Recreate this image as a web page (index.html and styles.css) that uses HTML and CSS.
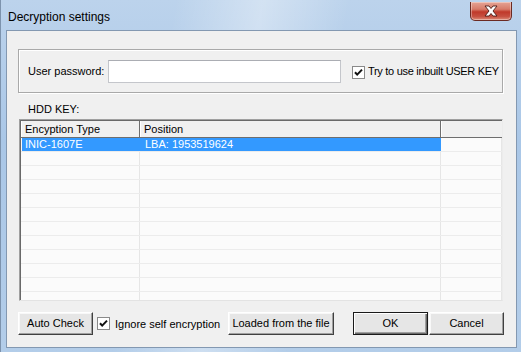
FILE: index.html
```html
<!DOCTYPE html>
<html>
<head>
<meta charset="utf-8">
<link rel="stylesheet" href="styles.css">
</head>
<body>
<div class="window">
  <div class="titlebar">
    <span class="title">Decryption settings</span>
    <div class="close">
      <svg width="16" height="12" viewBox="0 0 16 12"><path d="M2 1 L6 1 L8 3.5 L10 1 L14 1 L10 6 L14 11 L10 11 L8 8.5 L6 11 L2 11 L6 6 Z" fill="#fff" stroke="#4a1a14" stroke-width="0.9" stroke-linejoin="round"/></svg>
    </div>
  </div>
  <div class="client">
    <div class="group">
      <span class="pw-label">User password:</span>
      <div class="textbox"></div>
      <span class="check"><svg width="13" height="13" viewBox="0 0 13 13"><rect x="0.5" y="0.5" width="12" height="12" fill="#fff" stroke="#8a8a8a"/><path d="M3 6.2 L5.2 8.6 L10 3.6" fill="none" stroke="#111" stroke-width="2"/></svg></span>
      <span class="check-text">Try to use inbuilt USER KEY</span>
    </div>
    <div class="hdd-label">HDD KEY:</div>
    <div class="listview">
      <div class="lv-header">
        <div class="hcell c1">Encyption Type</div>
        <div class="hcell c2">Position</div>
        <div class="hcell c3"></div>
      </div>
      <div class="lv-row selected"><div class="cell c1">INIC-1607E</div><div class="cell c2">LBA: 1953519624</div><div class="cell c3"></div></div>
      <div class="lv-row"><div class="cell c1"></div><div class="cell c2"></div><div class="cell c3"></div></div>
      <div class="lv-row"><div class="cell c1"></div><div class="cell c2"></div><div class="cell c3"></div></div>
      <div class="lv-row"><div class="cell c1"></div><div class="cell c2"></div><div class="cell c3"></div></div>
      <div class="lv-row"><div class="cell c1"></div><div class="cell c2"></div><div class="cell c3"></div></div>
      <div class="lv-row"><div class="cell c1"></div><div class="cell c2"></div><div class="cell c3"></div></div>
      <div class="lv-row"><div class="cell c1"></div><div class="cell c2"></div><div class="cell c3"></div></div>
      <div class="lv-row"><div class="cell c1"></div><div class="cell c2"></div><div class="cell c3"></div></div>
      <div class="lv-row"><div class="cell c1"></div><div class="cell c2"></div><div class="cell c3"></div></div>
      <div class="lv-row"><div class="cell c1"></div><div class="cell c2"></div><div class="cell c3"></div></div>
      <div class="lv-row"><div class="cell c1"></div><div class="cell c2"></div><div class="cell c3"></div></div>
      <div class="lv-row"><div class="cell c1"></div><div class="cell c2"></div><div class="cell c3"></div></div>
    </div>
    <div class="actions">
      <div class="btn auto">Auto Check</div>
      <span class="check ignore"><svg width="13" height="13" viewBox="0 0 13 13"><rect x="0.5" y="0.5" width="12" height="12" fill="#fff" stroke="#8a8a8a"/><path d="M3 6.2 L5.2 8.6 L10 3.6" fill="none" stroke="#111" stroke-width="2"/></svg></span>
      <span class="ignore-text">Ignore self encryption</span>
      <div class="btn loaded">Loaded from the file</div>
      <div class="btn ok default">OK</div>
      <div class="btn cancel">Cancel</div>
    </div>
  </div>
</div>
</body>
</html>
```

FILE: styles.css
```css
* { box-sizing: border-box; }
html, body { margin: 0; padding: 0; }
body {
  width: 521px;
  height: 352px;
  overflow: hidden;
  background: #b4cde8;
  font-family: "Liberation Sans", Arial, sans-serif;
  font-size: 11px;
  color: #000;
}
.window {
  width: 521px;
  height: 352px;
  display: flex;
  flex-direction: column;
  background:
    linear-gradient(100deg, rgba(255,255,255,0) 30%, rgba(255,255,255,0.35) 45%, rgba(255,255,255,0) 60%),
    linear-gradient(180deg, #bcd3ec 0%, #aac7e7 40%, #b3cde9 100%);
  border-left: 1px solid #7d93ad;
}
.titlebar {
  height: 30px;
  flex: none;
  display: flex;
  align-items: flex-start;
  justify-content: space-between;
  padding-left: 7px;
  padding-right: 9px;
}
.title {
  font-size: 12px;
  margin-top: 10px;
  color: #000;
}
.close {
  margin-top: 2px;
  width: 42px;
  height: 19px;
  border: 1px solid #6b2a22;
  border-top: none;
  border-radius: 0 0 5px 5px;
  background: linear-gradient(180deg, #e5a495 0%, #d77b69 40%, #c0392a 55%, #c65040 80%, #de8c78 100%);
  box-shadow: inset 0 0 0 1px rgba(255,255,255,0.35);
  display: flex;
  align-items: center;
  justify-content: center;
}
.client {
  flex: 1;
  margin: 0 4px 4px 5px;
  background: #f0f0f0;
  border: 1px solid #8398b1;
  padding: 18px 12px 0 11px;
  display: flex;
  flex-direction: column;
}
.group {
  width: 485px;
  height: 44px;
  border: 1px solid #a9a9a9;
  box-shadow: inset 1px 1px 0 #fff, 1px 1px 0 #fff;
  display: flex;
  align-items: center;
  padding-left: 9px;
}
.pw-label { width: 80px; flex: none; }
.textbox {
  width: 233px;
  height: 23px;
  flex: none;
  background: #fff;
  border: 1px solid #c4c6cb;
  border-top-color: #abadb3;
}
.check { display: flex; flex: none; }
.group .check { margin-left: 11px; margin-top: 2px; }
.check-text { margin-left: 3px; white-space: nowrap; letter-spacing: -0.3px; }
.hdd-label {
  margin-top: 10px;
  height: 13px;
  line-height: 13px;
  padding-left: 10px;
}
.listview {
  margin-top: 3px;
  margin-left: 1px;
  width: 484px;
  height: 182px;
  background: #fbfbfb;
  border-top: 1px solid #a0a0a0;
  border-left: 1px solid #a0a0a0;
  border-right: 1px solid #ececec;
  border-bottom: 1px solid #e3e3e3;
  box-shadow: inset 1px 1px 0 #696969;
  overflow: hidden;
  display: flex;
  flex-direction: column;
}
.lv-header {
  display: flex;
  height: 17px;
  flex: none;
  background: #f0f0f0;
  border-bottom: 1px solid #6e6e6e;
  margin-left: 1px;
  margin-top: 1px;
}
.hcell {
  height: 16px;
  line-height: 16px;
  padding-left: 4px;
  border-right: 1px solid #6e6e6e;
  box-shadow: inset 1px 0 0 #fff;
}
.c1 { width: 119px; flex: none; }
.c2 { width: 301px; flex: none; }
.c3 { flex: 1; }
.hcell.c3 { border-right: none; }
.lv-row {
  display: flex;
  height: 14px;
  flex: none;
  border-bottom: 1px solid #ececec;
  margin-left: 1px;
}
.cell {
  height: 13px;
  line-height: 13px;
  padding-left: 3px;
  border-right: 1px solid #e6e6e6;
}
.cell.c3 { border-right: 1px solid #e6e6e6; }
.cell.c2 { padding-left: 5px; }
.lv-row.selected .c1,
.lv-row.selected .c2 {
  background: #3399ff;
  color: #fff;
  border-right-color: #3399ff;
}
.lv-row.selected .c1 { margin-left: 1px; width: 118px; }
.actions {
  margin-top: 11px;
  display: flex;
  align-items: center;
  height: 23px;
}
.btn {
  height: 23px;
  line-height: 21px;
  text-align: center;
  background: #e6e6e6;
  border-top: 1px solid #fff;
  border-left: 1px solid #fff;
  border-right: 1px solid #404040;
  border-bottom: 1px solid #404040;
  box-shadow: inset -1px -1px 0 #a0a0a0, inset 1px 1px 0 #f8f8f8;
  flex: none;
}
.auto { width: 75px; }
.check.ignore { margin-left: 4px; }
.ignore-text { margin-left: 5px; width: 113px; white-space: nowrap; flex: none; }
.loaded { width: 106px; }
.ok { width: 75px; margin-left: auto; }
.cancel { width: 75px; margin-left: 1px; }
.btn.default {
  border: 1px solid #1a1a1a;
  box-shadow: inset 1px 1px 0 #fff, inset -1px -1px 0 #6b6b6b, inset -2px -2px 0 #a0a0a0;
}
```
